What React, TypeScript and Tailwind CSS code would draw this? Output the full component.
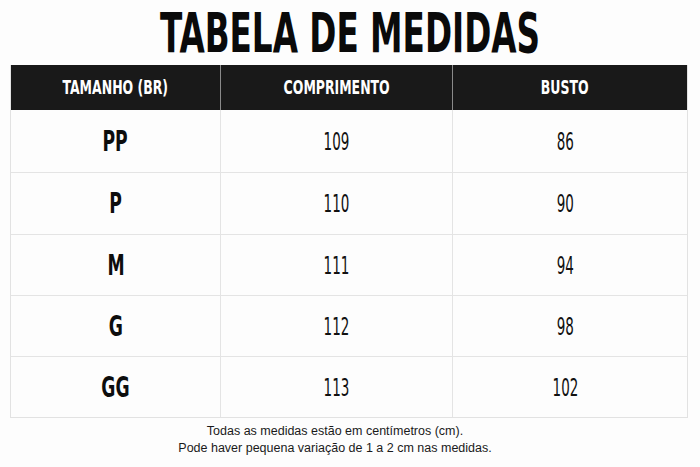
import React from "react";

const cond = "font-['DejaVu_Sans_Condensed','DejaVu_Sans',sans-serif] font-stretch-condensed";

const rows = [
  ["PP", "109", "86"],
  ["P", "110", "90"],
  ["M", "111", "94"],
  ["G", "112", "98"],
  ["GG", "113", "102"],
];
const heights = ["h-[62px]", "h-[62px]", "h-[61px]", "h-[61px]", "h-[61px]"];

export default function App() {
  return (
    <div className="w-[700px] h-[467px] bg-[#fdfdfd] flex flex-col items-center overflow-hidden">
      <div className="h-[65px] w-full flex items-center justify-center">
        <span className={`${cond} inline-block font-bold text-[55px] leading-none text-[#0a0a0a] scale-x-[0.66] whitespace-nowrap mt-[2px]`}>
          TABELA DE MEDIDAS
        </span>
      </div>
      <div className="w-[678px] ml-[-2px] border border-[#e2e2e2] border-t-0">
        <div className="grid grid-cols-[209px_232px_1fr] h-[45px] bg-[#191919]">
          {["TAMANHO (BR)", "COMPRIMENTO", "BUSTO"].map((h, i) => (
            <div
              key={h}
              className={`flex items-center justify-center ${i > 0 ? "border-l border-[#8a8a8a]" : ""} ${i === 2 ? "pr-[10px]" : ""}`}
            >
              <span className={`${cond} inline-block font-bold text-[19px] leading-none text-white scale-x-[0.73] whitespace-nowrap`}>
                {h}
              </span>
            </div>
          ))}
        </div>
        {rows.map((r, ri) => (
          <div
            key={r[0]}
            className={`grid grid-cols-[209px_232px_1fr] ${heights[ri]} ${ri > 0 ? "border-t border-[#e4e4e4]" : ""}`}
          >
            <div className="flex items-center justify-center">
              <span className={`${cond} inline-block font-bold text-[29px] leading-none text-[#0d0d0d] scale-x-[0.66]`}>
                {r[0]}
              </span>
            </div>
            <div className="flex items-center justify-center border-l border-[#e4e4e4]">
              <span className={`${cond} inline-block font-normal text-[25px] leading-none text-[#111] scale-x-[0.6]`}>
                {r[1]}
              </span>
            </div>
            <div className="flex items-center justify-center border-l border-[#e4e4e4] pr-[10px]">
              <span className={`${cond} inline-block font-normal text-[25px] leading-none text-[#111] scale-x-[0.6]`}>
                {r[2]}
              </span>
            </div>
          </div>
        ))}
      </div>
      <div className="mt-[5px] mr-[30px] flex flex-col items-center font-['Liberation_Sans',Arial,sans-serif] text-[12.5px] leading-[17px] text-[#1a1a1a]">
        <span>Todas as medidas estão em centímetros (cm).</span>
        <span>Pode haver pequena variação de 1 a 2 cm nas medidas.</span>
      </div>
    </div>
  );
}
